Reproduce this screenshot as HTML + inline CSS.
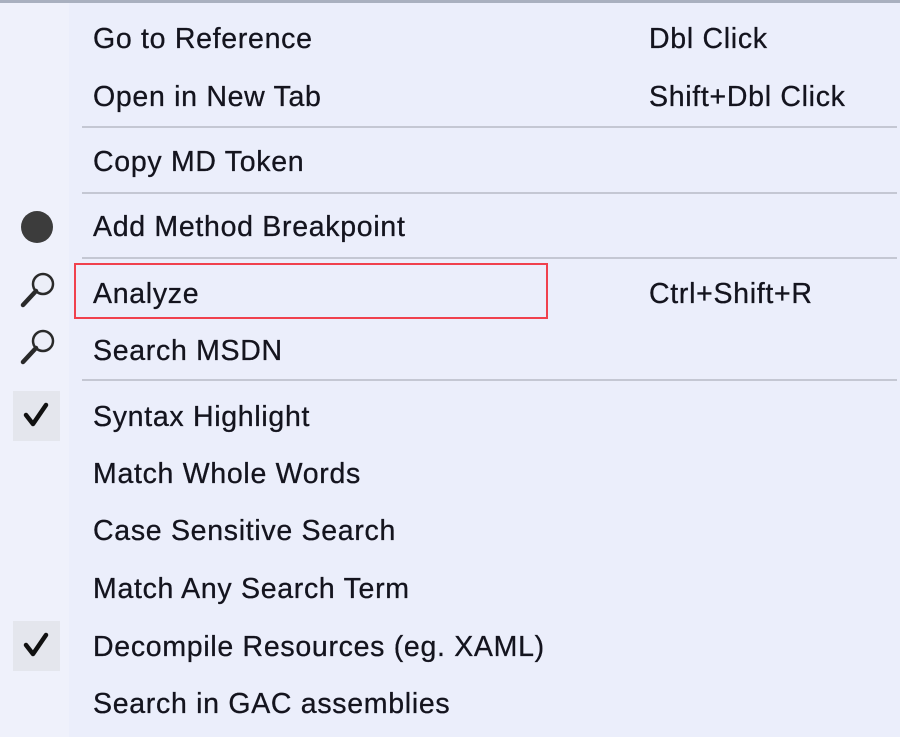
<!DOCTYPE html>
<html><head><meta charset="utf-8"><style>
html,body{margin:0;padding:0}
body{width:900px;height:737px;position:relative;overflow:hidden;background:#ebeefb;font-family:"Liberation Sans","DejaVu Sans",sans-serif;}
.strip{position:absolute;left:0;top:0;width:69px;height:737px;background:#eff1fb}
.top{position:absolute;left:0;top:0;width:900px;height:3px;background:#a9b0bf}
.t{position:absolute;font-size:28.5px;color:#14141e;line-height:34px;white-space:nowrap;letter-spacing:0.7px;-webkit-text-stroke:0.3px #14141e}
.sep{position:absolute;left:82px;width:815px;height:2px;background:#c4c7d3}
.chk{position:absolute;left:13px;width:47px;height:50px;background:#e4e6ed}
.red{position:absolute;left:74px;top:263px;width:470px;height:52px;border:2px solid #f0414d}
</style></head><body>
<div class="strip"></div>
<div class="top"></div>
<div class="t" style="left:93px;top:22px">Go to Reference</div>
<div class="t" style="left:649px;top:22px">Dbl Click</div>
<div class="t" style="left:93px;top:80px">Open in New Tab</div>
<div class="t" style="left:649px;top:80px">Shift+Dbl Click</div>
<div class="sep" style="top:126px"></div>
<div class="t" style="left:93px;top:145px">Copy MD Token</div>
<div class="sep" style="top:192px"></div>
<svg style="position:absolute;left:0;top:200px" width="70" height="120"><circle cx="37" cy="27" r="16" fill="#3c3c3c"/>
<circle cx="43" cy="84" r="10" fill="#eceef8" stroke="#2a2a2a" stroke-width="2.5"/><line x1="36" y1="91" x2="23" y2="105" stroke="#2a2a2a" stroke-width="4.5" stroke-linecap="round"/></svg>
<svg style="position:absolute;left:0;top:257px" width="70" height="120"><circle cx="43" cy="84" r="10" fill="#eceef8" stroke="#2a2a2a" stroke-width="2.5"/><line x1="36" y1="91" x2="23" y2="105" stroke="#2a2a2a" stroke-width="4.5" stroke-linecap="round"/></svg>
<div class="t" style="left:93px;top:210px">Add Method Breakpoint</div>
<div class="sep" style="top:257px"></div>
<div class="red"></div>
<div class="t" style="left:93px;top:277px">Analyze</div>
<div class="t" style="left:649px;top:277px">Ctrl+Shift+R</div>
<div class="t" style="left:93px;top:334px">Search MSDN</div>
<div class="sep" style="top:379px"></div>
<div class="chk" style="top:391px"><svg width="47" height="50"><path d="M13 24 L20 33 L33 14" fill="none" stroke="#111" stroke-width="4.5" stroke-linecap="round" stroke-linejoin="round"/></svg></div>
<div class="t" style="left:93px;top:400px">Syntax Highlight</div>
<div class="t" style="left:93px;top:457px">Match Whole Words</div>
<div class="t" style="left:93px;top:514px">Case Sensitive Search</div>
<div class="t" style="left:93px;top:572px">Match Any Search Term</div>
<div class="chk" style="top:621px"><svg width="47" height="50"><path d="M13 24 L20 33 L33 14" fill="none" stroke="#111" stroke-width="4.5" stroke-linecap="round" stroke-linejoin="round"/></svg></div>
<div class="t" style="left:93px;top:630px">Decompile Resources (eg. XAML)</div>
<div class="t" style="left:93px;top:687px">Search in GAC assemblies</div>
</body></html>
